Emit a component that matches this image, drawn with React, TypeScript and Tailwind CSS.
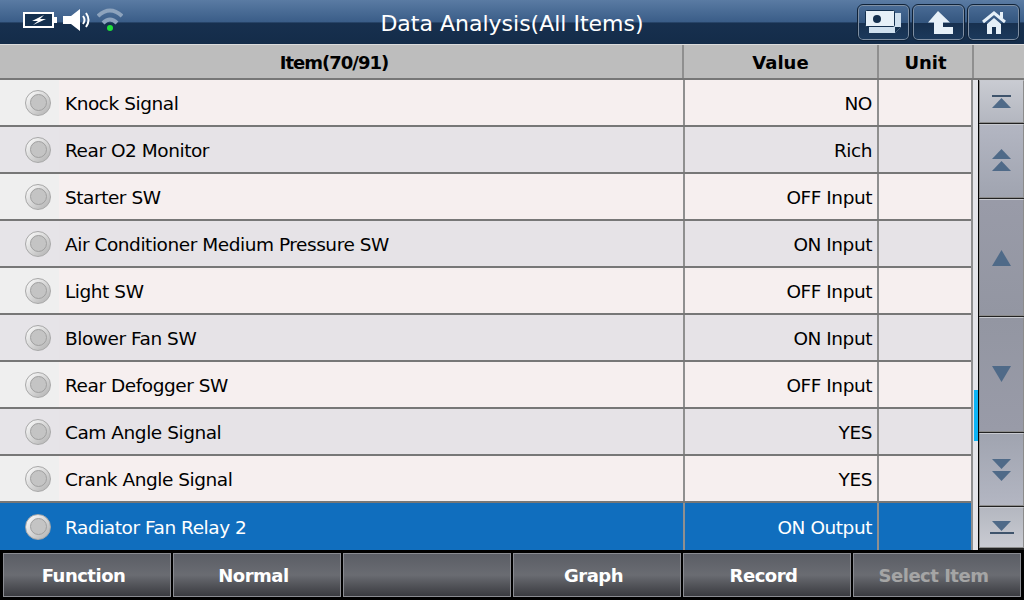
import type { ReactNode } from "react";

const rows = [
  { name: "Knock Signal", value: "NO" },
  { name: "Rear O2 Monitor", value: "Rich" },
  { name: "Starter SW", value: "OFF Input" },
  { name: "Air Conditioner Medium Pressure SW", value: "ON Input" },
  { name: "Light SW", value: "OFF Input" },
  { name: "Blower Fan SW", value: "ON Input" },
  { name: "Rear Defogger SW", value: "OFF Input" },
  { name: "Cam Angle Signal", value: "YES" },
  { name: "Crank Angle Signal", value: "YES" },
  { name: "Radiator Fan Relay 2", value: "ON Output" },
];

const footer = ["Function", "Normal", "", "Graph", "Record", "Select Item"];

function TopButton({ children }: { children: ReactNode }) {
  return (
    <div className="flex h-[37px] w-[53px] items-center justify-center rounded-[6px] border border-[#0f2238] bg-[linear-gradient(#4a6c96_0%,#34567f_50%,#17304f_52%,#1c3a5c_100%)] shadow-[inset_0_0_0_1px_#7f8fa3]">
      {children}
    </div>
  );
}

function Dot() {
  return (
    <div className="flex h-[26px] w-[26px] items-center justify-center rounded-full border border-[#a8a8a8] bg-gradient-to-br from-white to-[#b0b0b0]">
      <div className="h-[17px] w-[17px] rounded-full border border-[#a0a0a0] bg-[#c4c4c4]" />
    </div>
  );
}

function Tri({ down, y = 0, h = 10 }: { down?: boolean; y?: number; h?: number }) {
  const points = down ? `0,${y} 19,${y} 9.5,${y + h}` : `0,${y + h} 19,${y + h} 9.5,${y}`;
  return <polygon points={points} fill="#4f6a88" />;
}

function ScrollButton({ h, shade, children }: { h: string; shade: string; children: ReactNode }) {
  return (
    <div className={`flex w-[45px] items-center justify-center border border-[#8c8c8c] border-t-[#c8cad0] ${h} ${shade}`}>
      <svg width="25" height="30" viewBox="-3 0 25 30">
        {children}
      </svg>
    </div>
  );
}

export default function App() {
  return (
    <div className="flex h-[600px] w-[1024px] flex-col overflow-hidden bg-black font-['DejaVu_Sans',sans-serif]">
      <div className="relative flex h-[44px] items-center bg-[linear-gradient(#5a7ba3_0%,#3a5d88_50%,#17304f_52%,#142c49_100%)]">
        <div className="mb-[4px] flex items-center pl-[23px]">
          <svg width="34" height="16" viewBox="0 0 34 16">
            <rect x="1" y="1" width="29" height="14" fill="#14304f" stroke="#fff" strokeWidth="2" />
            <rect x="31" y="5" width="3" height="6" fill="#fff" />
            <path d="M21 3 L9 9 H15 L10 13 L23 7 H17 Z" fill="#fff" />
          </svg>
          <svg className="ml-[6px]" width="28" height="24" viewBox="0 0 28 24">
            <path d="M0 8 H8 L17 1 V23 L8 16 H0 Z" fill="#fff" />
            <path d="M20 8 Q23 12 20 16 M23 5 Q28 12 23 19" fill="none" stroke="#fff" strokeWidth="2" />
          </svg>
          <svg className="ml-[6px]" width="26" height="24" viewBox="0 0 26 24">
            <path d="M1 8 Q13 -3 25 8" fill="none" stroke="#8da3bd" strokeWidth="4" />
            <path d="M6 15 Q13 8 20 15" fill="none" stroke="#8da3bd" strokeWidth="4" />
            <circle cx="13" cy="20" r="3" fill="#1fe03a" />
          </svg>
        </div>
        <div className="absolute inset-x-0 top-0 flex h-[46px] items-center justify-center text-[22px] text-white">
          Data Analysis(All Items)
        </div>
        <div className="ml-auto flex gap-[2px] pr-[4px]">
          <TopButton>
            <svg width="37" height="24" viewBox="0 0 37 24">
              <path d="M4 3 H36 V17 L30 23 H4 Z" fill="#cfe0ef" />
              <path d="M30 23 V17 H36 Z" fill="#14304f" />
              <rect x="0.5" y="0.5" width="29" height="16" rx="1" fill="#e6f0f8" stroke="#14304f" />
              <circle cx="12" cy="9" r="4" fill="#14304f" />
            </svg>
          </TopButton>
          <TopButton>
            <svg className="-mr-[4px]" width="25" height="23" viewBox="0 0 25 23">
              <path d="M10 0 L0 11.5 H6 V23 H25 V16 H15 V11.5 H22 Z" fill="#e6f0f8" />
            </svg>
          </TopButton>
          <TopButton>
            <svg width="24" height="23" viewBox="0 0 24 23">
              <path d="M1 11 L12 2 L23 11" fill="none" stroke="#e6f0f8" strokeWidth="3" />
              <rect x="18" y="1" width="3" height="6" fill="#e6f0f8" />
              <path d="M5 13 L12 7 L19 13 V23 H14 V16 H10 V23 H5 Z" fill="#e6f0f8" />
            </svg>
          </TopButton>
        </div>
      </div>

      <div className="flex h-[36px] border-t border-b-2 border-[#dcdcdc] border-b-[#777] bg-[#bdbdbd] text-[18px] font-bold text-black">
        <div className="flex w-[684px] items-center justify-center border-r-2 border-[#8f8f8f] pr-[14px] pt-[2px] tracking-[-1px]">Item(70/91)</div>
        <div className="flex w-[195px] items-center justify-center border-r-2 border-[#8f8f8f] pt-[2px]">Value</div>
        <div className="flex w-[93px] items-center justify-center pt-[2px]">Unit</div>
        <div className="flex-1 border-l-2 border-[#8f8f8f]" />
      </div>

      <div className="flex h-[470px] bg-[#e4e4e8]">
        <div className="w-[973px] border-r-2 border-[#8f8f8f]">
          {rows.map((row, i) => {
            const selected = i === rows.length - 1;
            const bg = selected ? "bg-[#106ebe] text-white" : i % 2 ? "bg-[#e6e3e7] text-black" : "bg-[#f6efef] text-black";
            const cell = selected ? "bg-[#106ebe]" : i % 2 ? "bg-[#e6e4e8]" : "bg-[#efefef]";
            return (
              <div key={row.name} className={`flex h-[47px] border-b-2 border-[#777] text-[18.5px] tracking-[-0.45px] last:border-b-0 ${bg}`}>
                <div className={`flex w-[59px] items-center pl-[25px] ${cell}`}>
                  <Dot />
                </div>
                <div className="flex w-[624px] items-center pl-[6px] pt-[2px]">{row.name}</div>
                <div className="flex w-[196px] items-center justify-end border-x-2 border-[#8f8f8f] pr-[5px] pt-[2px]">{row.value}</div>
              </div>
            );
          })}
        </div>
        <div className="relative w-[5px]">
          <div className="absolute left-[1px] top-[310px] h-[51px] w-[4px] bg-[#0db4f5]" />
        </div>
        <div className="flex w-[46px] flex-col gap-[1px] border-l border-black bg-[#222]">
          <ScrollButton h="h-[43px]" shade="bg-gradient-to-b from-[#c9cbd2] to-[#b4b7c0]">
            <rect x="0" y="8" width="19" height="2" fill="#3f546c" />
            <Tri y={11} />
          </ScrollButton>
          <ScrollButton h="h-[74px]" shade="bg-gradient-to-b from-[#b3b6c2] to-[#a0a4b0]">
            <Tri y={3} />
            <Tri y={15} />
          </ScrollButton>
          <ScrollButton h="h-[117px]" shade="bg-gradient-to-b from-[#999ba8] to-[#9396a2]">
            <Tri y={7} h={16} />
          </ScrollButton>
          <ScrollButton h="h-[115px]" shade="bg-gradient-to-b from-[#9396a2] to-[#999ba8]">
            <Tri down y={6} h={16} />
          </ScrollButton>
          <ScrollButton h="h-[73px]" shade="bg-gradient-to-b from-[#a0a4b0] to-[#b3b6c2]">
            <Tri down y={4} />
            <Tri down y={16} />
          </ScrollButton>
          <ScrollButton h="h-[41px]" shade="bg-gradient-to-b from-[#b4b7c0] to-[#c9cbd2]">
            <Tri down y={8} />
            <rect x="-2" y="19" width="24" height="2" fill="#3f546c" />
          </ScrollButton>
        </div>
      </div>

      <div className="flex h-[50px] gap-[2px] bg-black px-[3px] pb-[3px] pt-[3px]">
        {footer.map((label, i) => (
          <div
            key={i}
            className={`flex h-[44px] w-[168px] items-center justify-center border border-[#8a8c92] bg-gradient-to-b from-[#5b5e66] via-[#6a6c72] to-[#3a3b40] pr-[7px] text-[18px] font-bold tracking-[-0.5px] ${label === "Select Item" ? "text-[#a5a5a5]" : "text-white"}`}
          >
            {label}
          </div>
        ))}
      </div>
    </div>
  );
}
